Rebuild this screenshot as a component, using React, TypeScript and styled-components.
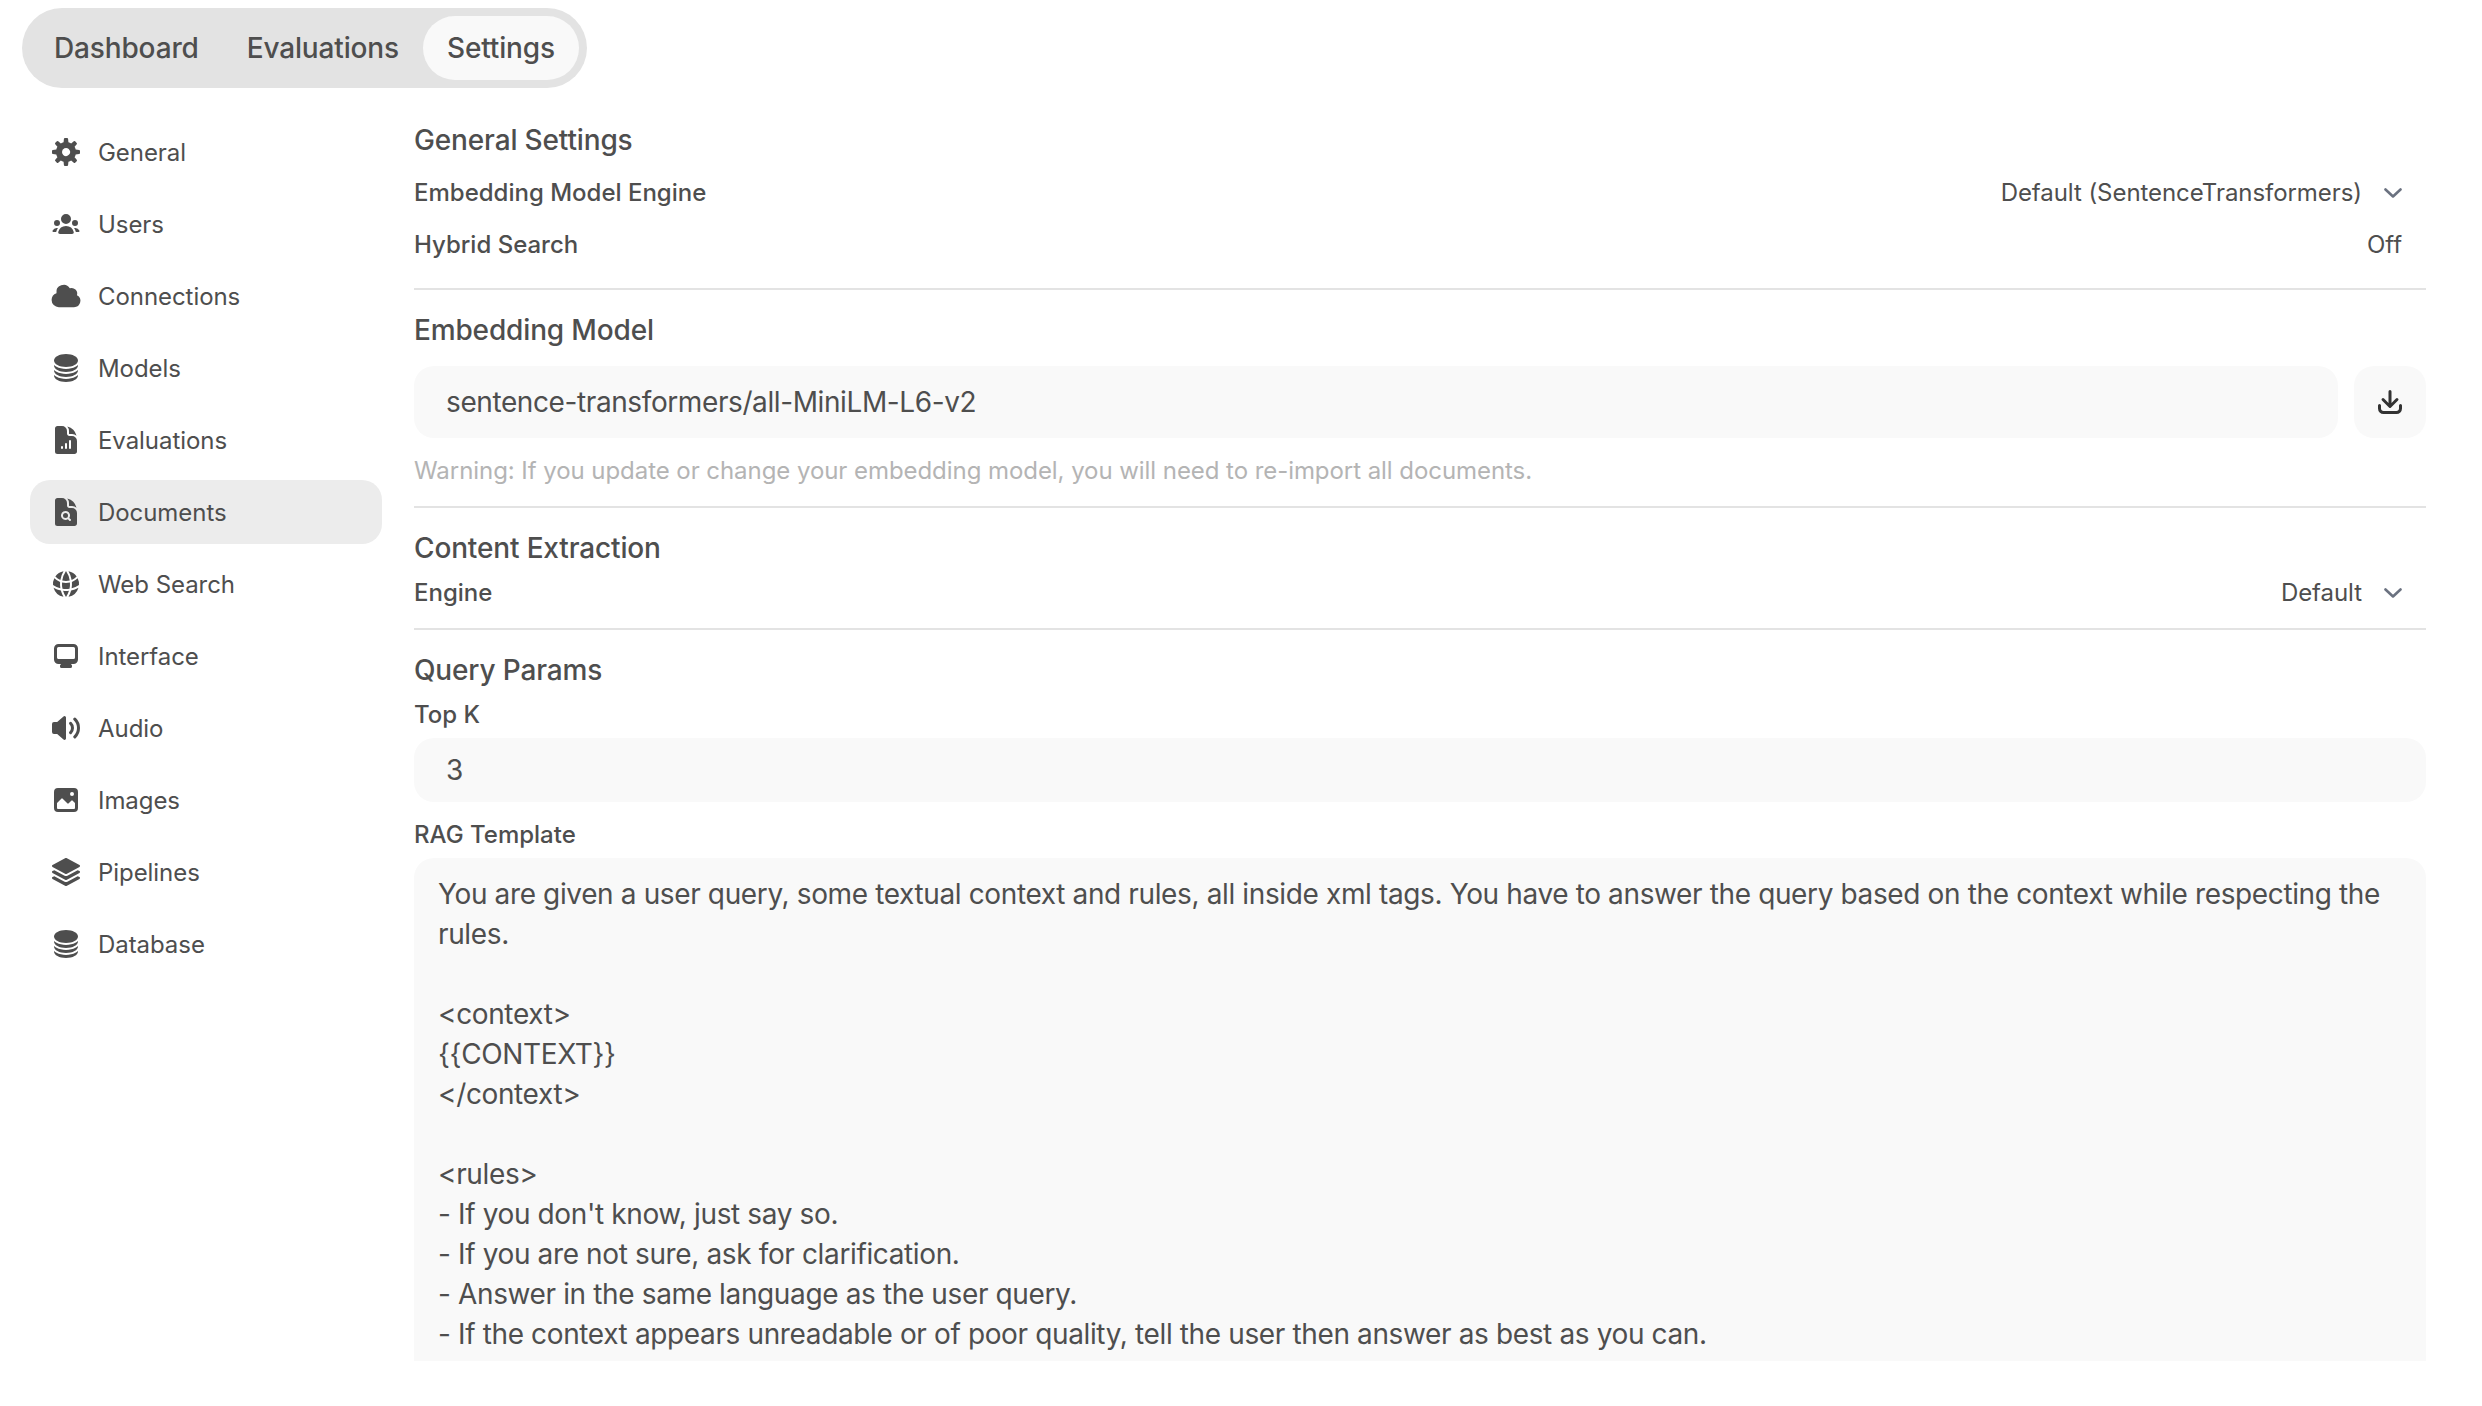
import React from "react";
import styled, { createGlobalStyle } from "styled-components";
import { HiCircleStack, HiDocumentChartBar, HiDocumentMagnifyingGlass, HiGlobeAlt, HiSquare3Stack3D } from "react-icons/hi2";

const Global = createGlobalStyle`
  html, body { margin: 0; padding: 0; background: #fff; }
  body { font-family: Inter, "Noto Sans", "Liberation Sans", sans-serif; color: #4e4e4e; }
  * { box-sizing: border-box; }
`;

const Page = styled.div`
  height: 1361px;
  overflow: hidden;
  padding: 8px 56px 0 22px;
`;
const TabBar = styled.div`
  display: inline-flex;
  height: 80px;
  padding: 8px;
  border-radius: 40px;
  background: #e3e3e3;
  margin-bottom: 32px;
`;
const Tab = styled.div<{ $active?: boolean }>`
  display: flex;
  align-items: center;
  padding: 0 24px;
  border-radius: 32px;
  font-size: 28px;
  font-weight: 500;
  letter-spacing: -0.15px;
  background: ${(p) => (p.$active ? "#f9f9f9" : "transparent")};
`;
const Body = styled.div`
  display: flex;
  align-items: flex-start;
`;
const Side = styled.nav`
  width: 352px;
  margin-left: 8px;
  margin-right: 32px;
  flex: none;
  display: flex;
  flex-direction: column;
  gap: 8px;
`;
const SideItem = styled.div<{ $active?: boolean }>`
  display: flex;
  align-items: center;
  gap: 16px;
  height: 64px;
  padding: 0 20px;
  border-radius: 20px;
  font-size: 24px;
  letter-spacing: -0.06px;
  background: ${(p) => (p.$active ? "#ececec" : "transparent")};
`;
const IconBox = styled.span`
  width: 32px;
  height: 32px;
  flex: none;
  display: flex;
  svg { width: 32px; height: 32px; display: block; fill: currentColor; }
`;
const Main = styled.main`
  flex: 1;
  min-width: 0;
`;
const Title = styled.div<{ $top?: number }>`
  font-size: 28px;
  line-height: 40px;
  font-weight: 500;
  letter-spacing: -0.15px;
  margin-top: ${(p) => p.$top ?? 0}px;
`;
const Row = styled.div<{ $top: number }>`
  display: flex;
  justify-content: space-between;
  align-items: center;
  height: 32px;
  margin-top: ${(p) => p.$top}px;
`;
const Label = styled.div<{ $top?: number }>`
  font-size: 24px;
  line-height: 32px;
  font-weight: 500;
  margin-top: ${(p) => p.$top ?? 0}px;
`;
const Value = styled.div`
  display: flex;
  align-items: center;
  gap: 22px;
  padding-right: 24px;
  font-size: 24px;
  line-height: 32px;
  letter-spacing: -0.06px;
  svg { width: 18px; height: 10px; display: block; }
`;
const Rule = styled.hr<{ $top: number }>`
  border: 0;
  height: 2px;
  background: #e3e3e3;
  margin: ${(p) => p.$top}px 0 0;
`;
const FieldRow = styled.div`
  display: flex;
  gap: 16px;
  margin-top: 16px;
`;
const Field = styled.div<{ $h: number; $top?: number }>`
  flex: 1;
  height: ${(p) => p.$h}px;
  margin-top: ${(p) => p.$top ?? 0}px;
  display: flex;
  align-items: center;
  padding: 0 32px;
  border-radius: 20px;
  background: #f9f9f9;
  font-size: 28px;
  letter-spacing: -0.4px;
`;
const IconButton = styled.button`
  flex: none;
  width: 72px;
  height: 72px;
  border: 0;
  padding: 0;
  border-radius: 20px;
  background: #f9f9f9;
  color: #333;
  display: flex;
  align-items: center;
  justify-content: center;
  svg { width: 32px; height: 32px; fill: currentColor; display: block; }
`;
const Hint = styled.div`
  margin-top: 17px;
  font-size: 24px;
  line-height: 32px;
  letter-spacing: -0.06px;
  color: #b4b4b4;
`;
const Template = styled.div`
  margin-top: 7px;
  height: 540px;
  padding: 16px 24px;
  border-radius: 20px;
  background: #f9f9f9;
  font-size: 28px;
  line-height: 40px;
  letter-spacing: -0.37px;
  white-space: pre-wrap;
`;

const Micro = ({ children }: { children: React.ReactNode }) => <svg viewBox="0 0 16 16">{children}</svg>;

const Chevron = () => (
  <svg viewBox="0 0 18 10" fill="none" stroke="#6b7280" strokeWidth="2.6" strokeLinecap="round" strokeLinejoin="round">
    <path d="M1.5 1.5 9 8.5l7.5-7" />
  </svg>
);

const items: { label: string; active?: boolean; icon: React.ReactNode }[] = [
  { label: "General", icon: <Micro><path fillRule="evenodd" clipRule="evenodd" d="M6.955 1.45A.5.5 0 0 1 7.452 1h1.096a.5.5 0 0 1 .497.45l.17 1.699c.484.12.94.312 1.356.562l1.321-1.081a.5.5 0 0 1 .67.033l.774.775a.5.5 0 0 1 .034.67l-1.08 1.32c.25.417.44.873.561 1.357l1.699.17a.5.5 0 0 1 .45.497v1.096a.5.5 0 0 1-.45.497l-1.699.17c-.12.484-.312.94-.562 1.356l1.082 1.322a.5.5 0 0 1-.034.67l-.774.774a.5.5 0 0 1-.67.033l-1.322-1.08c-.416.25-.872.44-1.356.561l-.17 1.699a.5.5 0 0 1-.497.45H7.452a.5.5 0 0 1-.497-.45l-.17-1.699a4.973 4.973 0 0 1-1.356-.562L4.108 13.37a.5.5 0 0 1-.67-.033l-.774-.775a.5.5 0 0 1-.034-.67l1.08-1.32a4.971 4.971 0 0 1-.561-1.357l-1.699-.17A.5.5 0 0 1 1 8.548V7.452a.5.5 0 0 1 .45-.497l1.699-.17c.12-.484.312-.94.562-1.356L2.629 4.107a.5.5 0 0 1 .034-.67l.774-.774a.5.5 0 0 1 .67-.033L5.43 3.71a4.97 4.97 0 0 1 1.356-.561l.17-1.699ZM6 8c0 .538.212 1.026.558 1.385l.057.057a2 2 0 0 0 2.828-2.828l-.058-.056A2 2 0 0 0 6 8Z" /></Micro> },
  { label: "Users", icon: <Micro><path d="M8 8a2.5 2.5 0 1 0 0-5 2.5 2.5 0 0 0 0 5ZM3.156 11.763c.16-.629.44-1.21.813-1.72a2.5 2.5 0 0 0-2.725 1.377c-.136.287.102.58.418.58h1.449c.01-.077.025-.156.045-.237ZM12.847 11.763c.02.08.036.16.046.237h1.446c.316 0 .554-.293.417-.579a2.5 2.5 0 0 0-2.722-1.378c.374.51.653 1.09.813 1.72ZM14 7.5a1.5 1.5 0 1 1-3 0 1.5 1.5 0 0 1 3 0ZM3.5 9a1.5 1.5 0 1 0 0-3 1.5 1.5 0 0 0 0 3ZM5 13c-.552 0-1.013-.455-.876-.99a4.002 4.002 0 0 1 7.753 0c.136.535-.324.99-.877.99H5Z" /></Micro> },
  { label: "Connections", icon: <svg viewBox="0 0 20 20"><path d="M1 12.5A4.5 4.5 0 005.5 17H15a4 4 0 001.866-7.539 3.504 3.504 0 00-4.504-4.272A4.5 4.5 0 004.06 8.235 4.502 4.502 0 001 12.5z" /></svg> },
  { label: "Models", icon: <HiCircleStack /> },
  { label: "Evaluations", icon: <HiDocumentChartBar /> },
  { label: "Documents", active: true, icon: <HiDocumentMagnifyingGlass /> },
  { label: "Web Search", icon: <HiGlobeAlt /> },
  { label: "Interface", icon: <Micro><path fillRule="evenodd" clipRule="evenodd" d="M2 4.25A2.25 2.25 0 0 1 4.25 2h7.5A2.25 2.25 0 0 1 14 4.25v5.5A2.25 2.25 0 0 1 11.75 12h-1.312c.1.128.21.248.328.36a.75.75 0 0 1 .234.545v.345a.75.75 0 0 1-.75.75h-4.5a.75.75 0 0 1-.75-.75v-.345a.75.75 0 0 1 .234-.545c.118-.111.228-.232.328-.36H4.25A2.25 2.25 0 0 1 2 9.75v-5.5Zm2.25-.75a.75.75 0 0 0-.75.75v4.5c0 .414.336.75.75.75h7.5a.75.75 0 0 0 .75-.75v-4.5a.75.75 0 0 0-.75-.75h-7.5Z" /></Micro> },
  { label: "Audio", icon: <Micro><path d="M7.557 2.066A.75.75 0 0 1 8 2.75v10.5a.75.75 0 0 1-1.248.56L3.59 11H2a1 1 0 0 1-1-1V6a1 1 0 0 1 1-1h1.59l3.162-2.81a.75.75 0 0 1 .805-.124ZM12.95 3.05a.75.75 0 1 0-1.06 1.06 5.5 5.5 0 0 1 0 7.78.75.75 0 1 0 1.06 1.06 7 7 0 0 0 0-9.9Z" /><path d="M10.828 5.172a.75.75 0 1 0-1.06 1.06 2.5 2.5 0 0 1 0 3.536.75.75 0 1 0 1.06 1.06 4 4 0 0 0 0-5.656Z" /></Micro> },
  { label: "Images", icon: <Micro><path fillRule="evenodd" clipRule="evenodd" d="M2 4a2 2 0 0 1 2-2h8a2 2 0 0 1 2 2v8a2 2 0 0 1-2 2H4a2 2 0 0 1-2-2V4Zm10.5 5.707a.5.5 0 0 0-.146-.353l-1-1a.5.5 0 0 0-.708 0L9.354 9.646a.5.5 0 0 1-.708 0L6.354 7.354a.5.5 0 0 0-.708 0l-2 2a.5.5 0 0 0-.146.353V12a.5.5 0 0 0 .5.5h8a.5.5 0 0 0 .5-.5V9.707ZM12 5a1 1 0 1 1-2 0 1 1 0 0 1 2 0Z" /></Micro> },
  { label: "Pipelines", icon: <HiSquare3Stack3D /> },
  { label: "Database", icon: <HiCircleStack /> },
];

const template = `You are given a user query, some textual context and rules, all inside xml tags. You have to answer the query based on the context while respecting the rules.

<context>
{{CONTEXT}}
</context>

<rules>
- If you don't know, just say so.
- If you are not sure, ask for clarification.
- Answer in the same language as the user query.
- If the context appears unreadable or of poor quality, tell the user then answer as best as you can.`;

export default function App() {
  return (
    <Page>
      <Global />
      <TabBar>
        <Tab>Dashboard</Tab>
        <Tab>Evaluations</Tab>
        <Tab $active>Settings</Tab>
      </TabBar>
      <Body>
        <Side>
          {items.map((it) => (
            <SideItem key={it.label} $active={it.active}>
              <IconBox>{it.icon}</IconBox>
              {it.label}
            </SideItem>
          ))}
        </Side>
        <Main>
          <Title>General Settings</Title>
          <Row $top={17}>
            <Label>Embedding Model Engine</Label>
            <Value>Default (SentenceTransformers)<Chevron /></Value>
          </Row>
          <Row $top={20}>
            <Label>Hybrid Search</Label>
            <Value>Off</Value>
          </Row>
          <Rule $top={27} />
          <Title $top={20}>Embedding Model</Title>
          <FieldRow>
            <Field $h={72}>sentence-transformers/all-MiniLM-L6-v2</Field>
            <IconButton aria-label="Download">
              <Micro>
                <path d="M8.75 2.75a.75.75 0 0 0-1.5 0v5.69L5.03 6.22a.75.75 0 0 0-1.06 1.06l3.5 3.5a.75.75 0 0 0 1.06 0l3.5-3.5a.75.75 0 0 0-1.06-1.06L8.75 8.44V2.75Z" />
                <path d="M3.5 9.75a.75.75 0 0 0-1.5 0v1.5A2.75 2.75 0 0 0 4.75 14h6.5A2.75 2.75 0 0 0 14 11.25v-1.5a.75.75 0 0 0-1.5 0v1.5c0 .69-.56 1.25-1.25 1.25h-6.5c-.69 0-1.25-.56-1.25-1.25v-1.5Z" />
              </Micro>
            </IconButton>
          </FieldRow>
          <Hint>Warning: If you update or change your embedding model, you will need to re-import all documents.</Hint>
          <Rule $top={19} />
          <Title $top={20}>Content Extraction</Title>
          <Row $top={9}>
            <Label>Engine</Label>
            <Value>Default<Chevron /></Value>
          </Row>
          <Rule $top={19} />
          <Title $top={20}>Query Params</Title>
          <Label $top={9}>Top K</Label>
          <Field $h={64} $top={7}>3</Field>
          <Label $top={17}>RAG Template</Label>
          <Template>{template}</Template>
        </Main>
      </Body>
    </Page>
  );
}
